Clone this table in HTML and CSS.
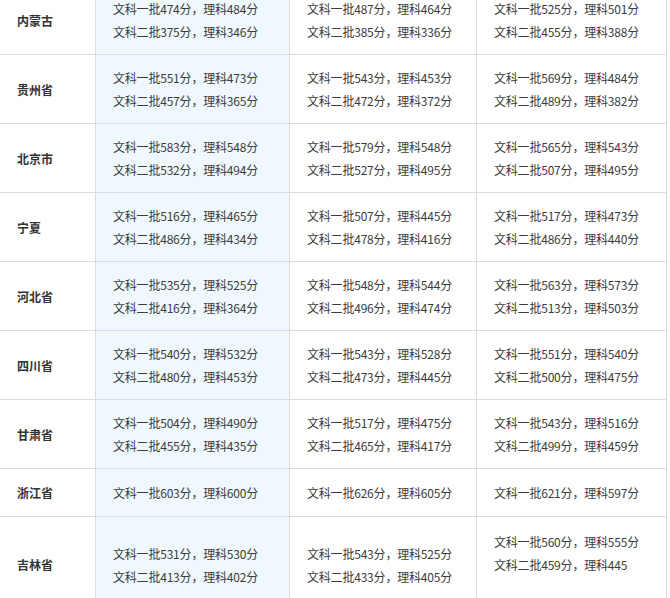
FILE: index.html
```html
<!DOCTYPE html>
<html lang="zh-CN">
<head>
<meta charset="utf-8">
<title>分数线</title>
<link rel="stylesheet" href="styles.css">
</head>
<body>
<table class="score-table">
  <colgroup>
    <col class="c-prov">
    <col class="c-a">
    <col class="c-b">
    <col class="c-c">
  </colgroup>
  <tbody>
    <tr>
      <th>内蒙古</th>
      <td class="hl">文科一批474分，理科484分<br>文科二批375分，理科346分</td>
      <td>文科一批487分，理科464分<br>文科二批385分，理科336分</td>
      <td>文科一批525分，理科501分<br>文科二批455分，理科388分</td>
    </tr>
    <tr>
      <th>贵州省</th>
      <td class="hl">文科一批551分，理科473分<br>文科二批457分，理科365分</td>
      <td>文科一批543分，理科453分<br>文科二批472分，理科372分</td>
      <td>文科一批569分，理科484分<br>文科二批489分，理科382分</td>
    </tr>
    <tr>
      <th>北京市</th>
      <td class="hl">文科一批583分，理科548分<br>文科二批532分，理科494分</td>
      <td>文科一批579分，理科548分<br>文科二批527分，理科495分</td>
      <td>文科一批565分，理科543分<br>文科二批507分，理科495分</td>
    </tr>
    <tr>
      <th>宁夏</th>
      <td class="hl">文科一批516分，理科465分<br>文科二批486分，理科434分</td>
      <td>文科一批507分，理科445分<br>文科二批478分，理科416分</td>
      <td>文科一批517分，理科473分<br>文科二批486分，理科440分</td>
    </tr>
    <tr>
      <th>河北省</th>
      <td class="hl">文科一批535分，理科525分<br>文科二批416分，理科364分</td>
      <td>文科一批548分，理科544分<br>文科二批496分，理科474分</td>
      <td>文科一批563分，理科573分<br>文科二批513分，理科503分</td>
    </tr>
    <tr>
      <th>四川省</th>
      <td class="hl">文科一批540分，理科532分<br>文科二批480分，理科453分</td>
      <td>文科一批543分，理科528分<br>文科二批473分，理科445分</td>
      <td>文科一批551分，理科540分<br>文科二批500分，理科475分</td>
    </tr>
    <tr>
      <th>甘肃省</th>
      <td class="hl">文科一批504分，理科490分<br>文科二批455分，理科435分</td>
      <td>文科一批517分，理科475分<br>文科二批465分，理科417分</td>
      <td>文科一批543分，理科516分<br>文科二批499分，理科459分</td>
    </tr>
    <tr class="single">
      <th>浙江省</th>
      <td class="hl">文科一批603分，理科600分</td>
      <td>文科一批626分，理科605分</td>
      <td>文科一批621分，理科597分</td>
    </tr>
    <tr class="last">
      <th>吉林省</th>
      <td class="hl">文科一批531分，理科530分<br>文科二批413分，理科402分</td>
      <td>文科一批543分，理科525分<br>文科二批433分，理科405分</td>
      <td>文科一批560分，理科555分<br>文科二批459分，理科445<br>&nbsp;</td>
    </tr>
  </tbody>
</table>
</body>
</html>
```

FILE: styles.css
```css
html, body {
  margin: 0;
  padding: 0;
  background: #ffffff;
}

.score-table {
  margin-top: -14px;
  width: 667px;
  table-layout: fixed;
  border-collapse: separate;
  border-spacing: 0;
  font-family: "Noto Sans CJK SC", "Noto Sans", sans-serif;
  font-size: 12px;
  line-height: 23px;
  letter-spacing: -0.2px;
  color: #3c3c3c;
}

.c-prov { width: 96px; }
.c-a { width: 194px; }
.c-b { width: 187px; }
.c-c { width: 190px; }

.score-table th,
.score-table td {
  padding: 11px 0 11px 17px;
  border-right: 1px solid #dcdcdc;
  border-bottom: 1px solid #dcdcdc;
  vertical-align: middle;
  text-align: left;
  white-space: nowrap;
  overflow: hidden;
}

.score-table th {
  font-weight: bold;
  letter-spacing: 0;
  color: #333333;
}

.score-table td.hl {
  background: #eef8fd;
}

.score-table tr.single th,
.score-table tr.single td {
  padding-top: 12px;
  padding-bottom: 12px;
}

.score-table tr.last th,
.score-table tr.last td {
  padding-top: 13px;
  padding-bottom: 13px;
}
```
